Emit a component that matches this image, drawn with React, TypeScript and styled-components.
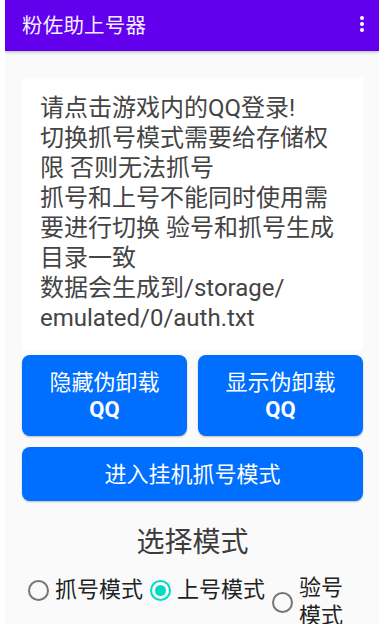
import React, { FC, ReactElement, useState } from "react";
import styled, { createGlobalStyle } from "styled-components";

const GlobalStyle = createGlobalStyle`
  html, body {
    margin: 0;
    padding: 0;
    background: #ffffff;
  }
  body {
    font-family: Roboto, "Noto Sans CJK SC", sans-serif;
  }
`;

const modes = ["抓号模式", "上号模式", "验号模式"];

const App: FC = (): ReactElement => {
  const [mode, setMode] = useState(1);

  return (
    <Shell>
      <GlobalStyle />
      <AppBar>
        <Title>粉佐助上号器</Title>
        <MenuButton aria-label="更多">
          <svg width="6" height="18" viewBox="0 0 6 18">
            <circle cx="3" cy="3" r="2" fill="#fff" />
            <circle cx="3" cy="9" r="2" fill="#fff" />
            <circle cx="3" cy="15" r="2" fill="#fff" />
          </svg>
        </MenuButton>
      </AppBar>
      <Content>
        <Card>
          请点击游戏内的QQ登录!
          <br />
          切换抓号模式需要给存储权限 否则无法抓号
          <br />
          抓号和上号不能同时使用需要进行切换 验号和抓号生成目录一致
          <br />
          数据会生成到/storage/
          <wbr />
          emulated/0/auth.txt
        </Card>
        <ButtonRow>
          <ActionButton $tall>
            隐藏伪卸载
            <br />
            <Latin>QQ</Latin>
          </ActionButton>
          <ActionButton $tall>
            显示伪卸载
            <br />
            <Latin>QQ</Latin>
          </ActionButton>
        </ButtonRow>
        <ActionButton>进入挂机抓号模式</ActionButton>
        <SectionTitle>选择模式</SectionTitle>
        <RadioGroup>
          {modes.map((label, i) => (
            <RadioItem
              key={label}
              $squeeze={i === modes.length - 1}
              onClick={() => setMode(i)}
            >
              <RadioBox>
                <RadioCircle $checked={mode === i} />
              </RadioBox>
              <RadioLabel>{label}</RadioLabel>
            </RadioItem>
          ))}
        </RadioGroup>
      </Content>
    </Shell>
  );
};

export default App;

const Shell = styled.div`
  margin-left: 5px;
  height: 624px;
  overflow: hidden;
  background: #fafafa;
  display: flex;
  flex-direction: column;
`;

const AppBar = styled.header`
  height: 51px;
  flex: 0 0 auto;
  background: #6200ee;
  display: flex;
  align-items: center;
  justify-content: space-between;
  padding: 0 14px 0 17px;
  box-shadow: 0 1px 3px rgba(0, 0, 0, 0.3);
  position: relative;
  z-index: 1;
`;

const Title = styled.h1`
  margin: 0;
  font-size: 20.5px;
  font-weight: 400;
  color: #f4efff;
  letter-spacing: 0.2px;
  margin-top: -3px;
`;

const MenuButton = styled.div`
  display: flex;
  align-items: center;
  margin-top: -3px;
`;

const Content = styled.main`
  display: flex;
  flex-direction: column;
  padding: 27px 16px 0 17px;
  gap: 11px;
`;

const Card = styled.div`
  background: #ffffff;
  padding: 15px 18px 17px 18px;
  font-size: 24px;
  line-height: 30px;
  color: #444444;
  margin-bottom: -6px;
`;

const ButtonRow = styled.div`
  display: grid;
  grid-template-columns: 1fr 1fr;
  gap: 11px;
`;

const ActionButton = styled.button<{ $tall?: boolean }>`
  border: 0;
  border-radius: 8px;
  background: #006eff;
  color: #ffffff;
  font-family: Roboto, "Noto Sans CJK SC", sans-serif;
  font-size: 22px;
  line-height: 27px;
  height: ${(p) => (p.$tall ? "81px" : "54px")};
  padding: 0 8px;
  box-shadow: 0 1px 2px rgba(0, 0, 0, 0.25);
  text-align: center;
`;

const Latin = styled.span`
  font-weight: 700;
`;

const SectionTitle = styled.h2`
  margin: 12px 0 0 0;
  text-align: center;
  font-size: 28px;
  font-weight: 400;
  line-height: 38px;
  color: #3c3c3c;
`;

const RadioGroup = styled.div`
  display: flex;
  align-items: flex-start;
  margin-top: 1px;
`;

const RadioItem = styled.label<{ $squeeze?: boolean }>`
  display: flex;
  align-items: center;
  min-height: 32px;
  margin-right: 1px;
  flex: ${(p) => (p.$squeeze ? "0 1 auto" : "0 0 auto")};
  min-width: 0;
  cursor: pointer;
`;

const RadioBox = styled.span`
  flex: 0 0 32px;
  height: 32px;
  display: flex;
  align-items: center;
  justify-content: center;
`;

const RadioCircle = styled.span<{ $checked: boolean }>`
  box-sizing: border-box;
  width: 21px;
  height: 21px;
  border-radius: 50%;
  border: 2px solid ${(p) => (p.$checked ? "#03dac5" : "#757575")};
  display: flex;
  align-items: center;
  justify-content: center;

  &::after {
    content: "";
    width: 11px;
    height: 11px;
    border-radius: 50%;
    background: #03dac5;
    display: ${(p) => (p.$checked ? "block" : "none")};
  }
`;

const RadioLabel = styled.span`
  font-size: 22px;
  line-height: 28px;
  color: #222222;
  padding-left: 1px;
`;
